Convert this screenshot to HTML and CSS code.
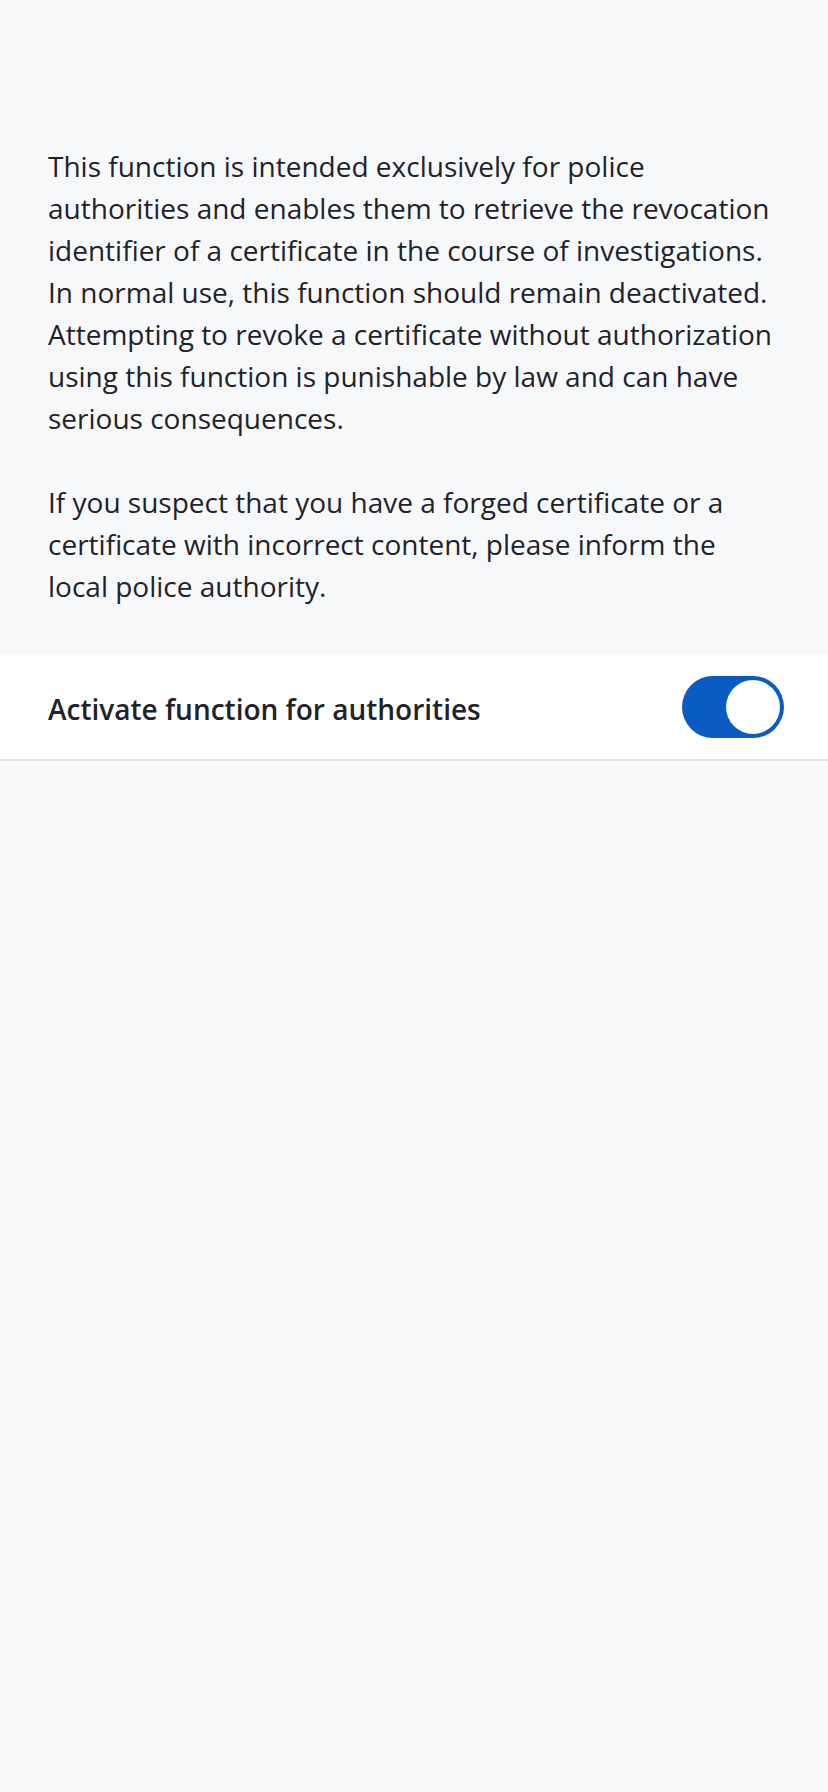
FILE: index.html
```html
<!DOCTYPE html>
<html lang="en">
<head>
<meta charset="utf-8">
<title>Authorities function</title>
<link rel="stylesheet" href="styles.css">
</head>
<body>
<main class="screen">
  <section class="intro">
    <p>This function is intended exclusively for police authorities and enables them to retrieve the revocation identifier of a certificate in the course of investigations. In normal use, this function should remain deactivated. Attempting to revoke a certificate without authorization using this function is punishable by law and can have serious consequences.</p>
    <p>If you suspect that you have a forged certificate or a certificate with incorrect content, please inform the local police authority.</p>
  </section>
  <div class="setting-row">
    <span class="setting-label">Activate function for authorities</span>
    <span class="toggle is-on" role="switch" aria-checked="true"><span class="toggle-thumb"></span></span>
  </div>
</main>
</body>
</html>
```
FILE: styles.css
```css
* { box-sizing: border-box; }
html, body { margin: 0; padding: 0; }
body {
  background: #f7f8fa;
  font-family: "Open Sans", "Noto Sans", sans-serif;
  color: #1f2329;
  min-height: 1792px;
}
.screen { display: flex; flex-direction: column; }
.intro {
  padding: 145px 48px 47px 48px;
}
.intro p {
  margin: 0 0 42px 0;
  font-size: 28px;
  line-height: 42px;
}
.intro p:last-child { margin-bottom: 0; }
.setting-row {
  display: flex;
  align-items: center;
  justify-content: space-between;
  background: #ffffff;
  height: 107px;
  padding: 0 44px 0 48px;
  border-bottom: 2px solid #e3e5ea;
}
.setting-label {
  font-size: 28px;
  font-weight: 600;
  line-height: 36px;
  padding-top: 4px;
}
.toggle {
  display: flex;
  align-items: center;
  justify-content: flex-end;
  width: 102px;
  height: 62px;
  padding: 4px;
  border-radius: 31px;
  background: #0a5cc2;
}
.toggle-thumb {
  width: 54px;
  height: 54px;
  border-radius: 50%;
  background: #ffffff;
}
```
